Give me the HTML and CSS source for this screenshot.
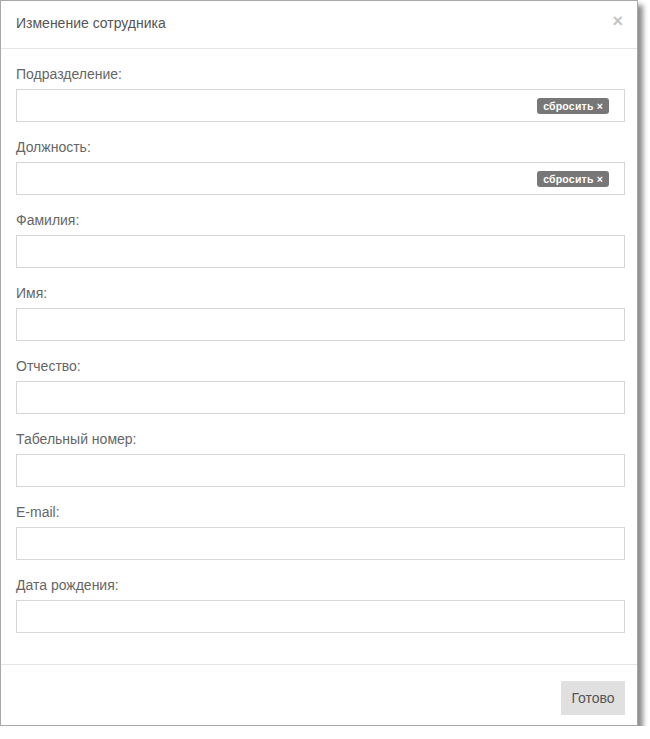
FILE: index.html
```html
<!DOCTYPE html>
<html lang="ru">
<head>
<meta charset="utf-8">
<link rel="stylesheet" href="styles.css">
</head>
<body>
<div class="modal">
  <div class="modal-header">
    <span class="modal-title">Изменение сотрудника</span>
    <span class="close">×</span>
  </div>
  <div class="modal-body">
    <div class="field">
      <label class="label">Подразделение:</label>
      <div class="input"><span class="badge">сбросить ×</span></div>
    </div>
    <div class="field">
      <label class="label">Должность:</label>
      <div class="input"><span class="badge">сбросить ×</span></div>
    </div>
    <div class="field">
      <label class="label">Фамилия:</label>
      <div class="input"></div>
    </div>
    <div class="field">
      <label class="label">Имя:</label>
      <div class="input"></div>
    </div>
    <div class="field">
      <label class="label">Отчество:</label>
      <div class="input"></div>
    </div>
    <div class="field">
      <label class="label">Табельный номер:</label>
      <div class="input"></div>
    </div>
    <div class="field">
      <label class="label">E-mail:</label>
      <div class="input"></div>
    </div>
    <div class="field">
      <label class="label">Дата рождения:</label>
      <div class="input"></div>
    </div>
  </div>
  <div class="modal-footer">
    <button class="btn">Готово</button>
  </div>
</div>
</body>
</html>
```
FILE: styles.css
```css
html, body {
  margin: 0;
  padding: 0;
  background: #fff;
}
body {
  font-family: "Liberation Sans", Arial, sans-serif;
  color: #555;
}
* {
  box-sizing: border-box;
}
.modal {
  width: 638px;
  height: 726px;
  border: 1px solid #a8a8a8;
  background: #fff;
  box-shadow: 5px 5px 5px rgba(0,0,0,0.45);
  display: flex;
  flex-direction: column;
}
.modal-header {
  height: 48px;
  flex: none;
  border-bottom: 1px solid #e5e5e5;
  display: flex;
  align-items: center;
  justify-content: space-between;
  padding: 0 14px 0 15px;
}
.modal-title {
  font-size: 14px;
  color: #555;
  margin-top: -4px;
}
.close {
  font-size: 18px;
  font-weight: bold;
  color: #c4c4c4;
  margin-top: -6px;
}
.modal-body {
  flex: 1;
  padding: 17px 12px 0 15px;
  display: flex;
  flex-direction: column;
}
.field {
  display: flex;
  flex-direction: column;
  margin-bottom: 17px;
}
.label {
  font-size: 14px;
  color: #666;
  height: 17px;
  line-height: 17px;
  margin-bottom: 6px;
}
.input {
  height: 33px;
  border: 1px solid #d6d6d6;
  display: flex;
  align-items: center;
  justify-content: flex-end;
  padding-right: 15px;
}
.badge {
  background: #777;
  color: #fff;
  font-size: 10.5px;
  font-weight: bold;
  border-radius: 3px;
  padding: 2px 6px 2px;
  line-height: 12px;
  font-family: "Liberation Sans", Arial, sans-serif;
  letter-spacing: 0.2px;
}
.modal-footer {
  height: 61px;
  flex: none;
  border-top: 1px solid #e5e5e5;
  display: flex;
  align-items: flex-start;
  justify-content: flex-end;
  padding: 16px 12px 0 0;
}
.btn {
  width: 64px;
  height: 34px;
  background: #e0e0e0;
  border: none;
  color: #555;
  font-family: "Liberation Sans", Arial, sans-serif;
  font-size: 14px;
  padding: 0;
}
```
